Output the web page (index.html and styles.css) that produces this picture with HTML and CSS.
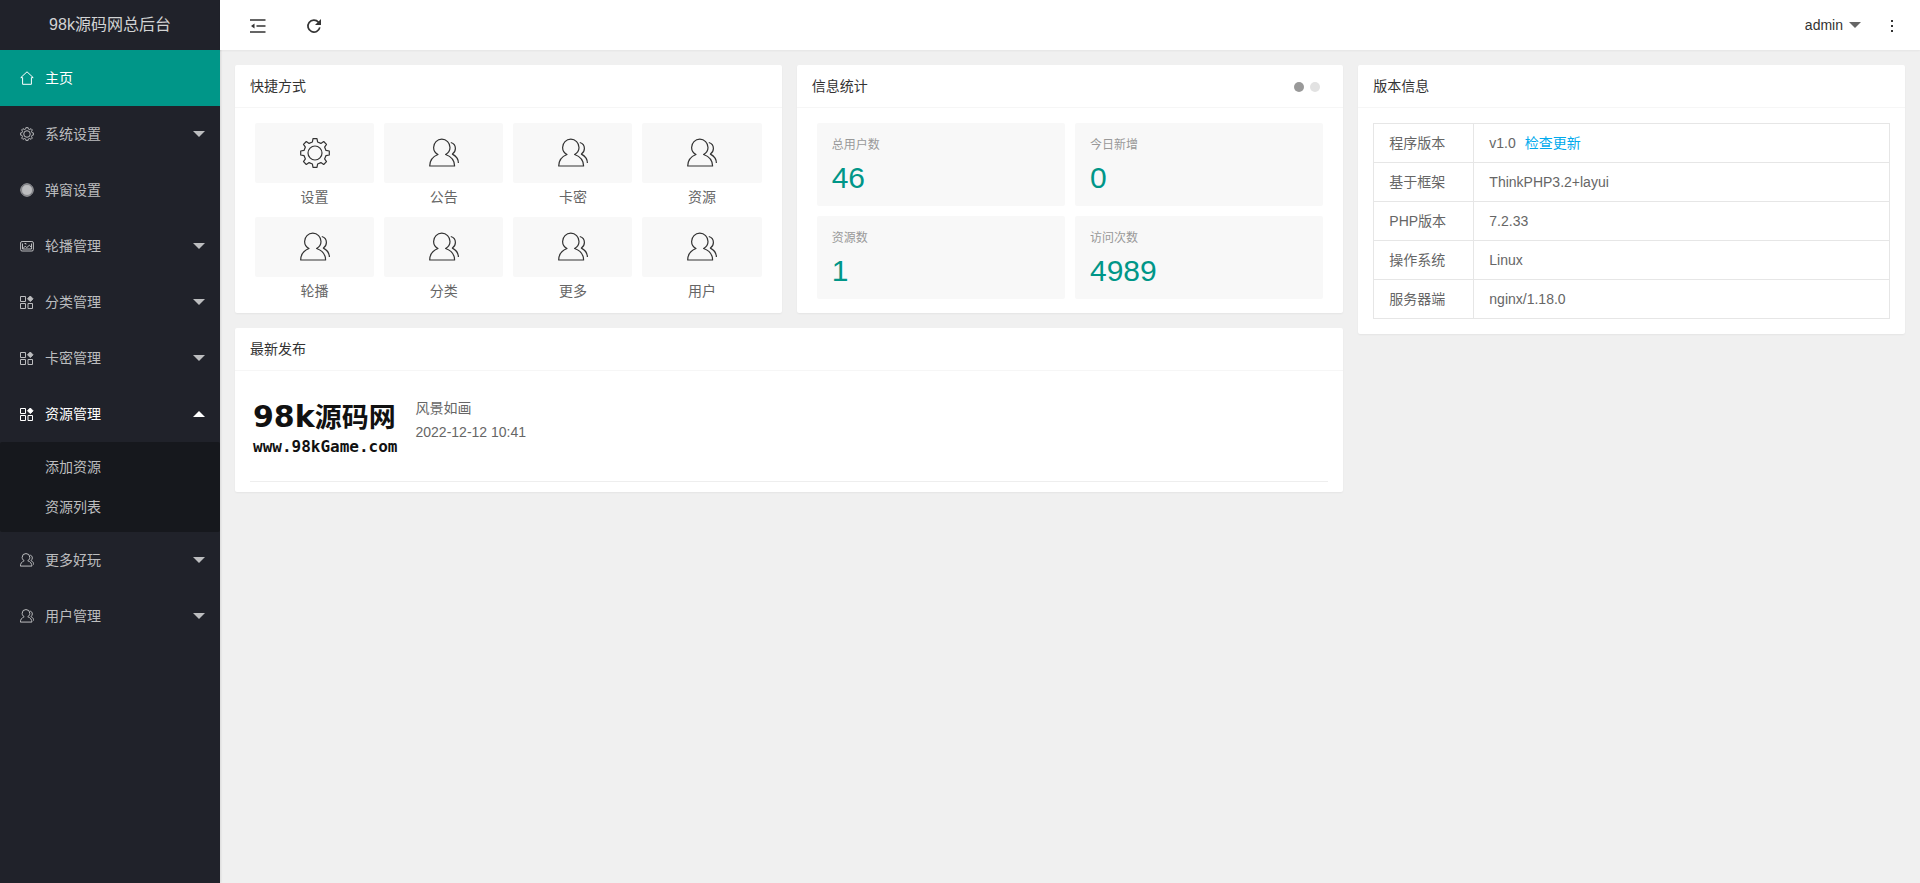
FILE: index.html
```html
<!DOCTYPE html>
<html lang="zh-CN">
<head>
<meta charset="utf-8">
<meta name="viewport" content="width=device-width, initial-scale=1">
<title>98k源码网总后台</title>
<link rel="stylesheet" href="styles.css">
</head>
<body>
<svg class="sprite" aria-hidden="true">
  <symbol id="i-home" viewBox="0 0 14 14"><path d="M7 .8L.8 6.6H2.6V13.3H11.4V6.6H13.2Z"/></symbol>
  <symbol id="i-gear" viewBox="-15 -15 30 30"><path d="M-2-14.3H2L2.6-11L5.9-9.6L8.7-11.5L11.5-8.7L9.6-5.9L11-2.6L14.3-2V2L11 2.6L9.6 5.9L11.5 8.7L8.7 11.5L5.9 9.6L2.6 11L2 14.3H-2L-2.6 11L-5.9 9.6L-8.7 11.5L-11.5 8.7L-9.6 5.9L-11 2.6L-14.3 2V-2L-11-2.6L-9.6-5.9L-11.5-8.7L-8.7-11.5L-5.9-9.6L-2.6-11Z"/><circle r="7"/></symbol>
  <symbol id="i-dot" viewBox="0 0 14 14"><circle cx="7" cy="7" r="6.2"/><circle cx="7" cy="7" r="5" fill="currentColor"/></symbol>
  <symbol id="i-pic" viewBox="0 0 14 14"><rect x=".6" y="2.500" width="12.800" height="9.500" rx="1.500"/><path d="M2.500 10L5.200 7.200L6.800 8.600L9.400 6.200L11.500 8.500V10ZM2.500 10V4.500M11.500 8.500V4.500M4.500 4.500H6V5.500"/></symbol>
  <symbol id="i-app" viewBox="0 0 14 14"><path d="M.5 1.500H5.500V6.500H.5ZM.5 8.500H5.500V13.500H.5ZM8 8.500H12.500V13.500H8Z"/><path fill="currentColor" d="M10.300 1L13 3.800L10.300 6.600L7.500 3.800Z"/></symbol>
  <symbol id="i-user" viewBox="0 0 30 30"><path d="M9 16.500C6 14.800 4.600 12.200 4.600 9.400a8.200 8.200 0 0 1 16.400 0c0 2.800-1.500 5.400-4.400 7.100 5.500 2 9 6.500 9 11.500H.7c0-5 3.300-9.500 8.300-11.500z"/><path d="M21.800 4.500c2.800.8 4.600 3 4.600 6 0 2.400-1 4.200-3 5.600 3.800 2 6 5 6 9"/></symbol>
</svg>

<div class="app">
  <aside class="side">
    <div class="brand">98k源码网总后台</div>
    <nav>
      <ul class="menu">
        <li><a class="item active" href="#"><svg class="ico"><use href="#i-home"/></svg>主页</a></li>
        <li><a class="item" href="#"><svg class="ico"><use href="#i-gear"/></svg>系统设置<span class="caret"></span></a></li>
        <li><a class="item" href="#"><svg class="ico"><use href="#i-dot"/></svg>弹窗设置</a></li>
        <li><a class="item" href="#"><svg class="ico"><use href="#i-pic"/></svg>轮播管理<span class="caret"></span></a></li>
        <li><a class="item" href="#"><svg class="ico"><use href="#i-app"/></svg>分类管理<span class="caret"></span></a></li>
        <li><a class="item" href="#"><svg class="ico"><use href="#i-app"/></svg>卡密管理<span class="caret"></span></a></li>
        <li>
          <a class="item open" href="#"><svg class="ico"><use href="#i-app"/></svg>资源管理<span class="caret up"></span></a>
          <ul class="submenu">
            <li><a href="#">添加资源</a></li>
            <li><a href="#">资源列表</a></li>
          </ul>
        </li>
        <li><a class="item" href="#"><svg class="ico"><use href="#i-user"/></svg>更多好玩<span class="caret"></span></a></li>
        <li><a class="item" href="#"><svg class="ico"><use href="#i-user"/></svg>用户管理<span class="caret"></span></a></li>
      </ul>
    </nav>
  </aside>

  <div class="page">
    <header class="topbar">
      <button class="tool" type="button" aria-label="侧边伸缩">
        <svg width="16" height="16" viewBox="0 0 16 16"><path d="M0 2H15.500M6.500 8H15.500M0 14H15.500" fill="none" stroke="currentColor" stroke-width="1.600"/><path d="M1 8L4.500 5.600V10.400Z" fill="currentColor"/></svg>
      </button>
      <button class="tool" type="button" aria-label="刷新">
        <svg width="16" height="16" viewBox="0 0 16 16"><path d="M12.500 4.200A6 6 0 1 0 13.800 9.300" fill="none" stroke="currentColor" stroke-width="1.700"/><path d="M15 1V7H9Z" fill="currentColor"/></svg>
      </button>
      <button class="account" type="button">admin<span class="caret"></span></button>
      <button class="more" type="button" aria-label="更多">
        <svg width="4" height="14" viewBox="0 0 4 14" fill="currentColor"><path d="M1 1H3V3H1ZM1 6H3V8H1ZM1 11H3V13H1Z"/></svg>
      </button>
    </header>

    <main class="board">
      <section class="card">
        <h2 class="card-head">快捷方式</h2>
        <ul class="shortcuts">
          <li><a href="#"><span class="tile"><svg><use href="#i-gear"/></svg></span>设置</a></li>
          <li><a href="#"><span class="tile"><svg><use href="#i-user"/></svg></span>公告</a></li>
          <li><a href="#"><span class="tile"><svg><use href="#i-user"/></svg></span>卡密</a></li>
          <li><a href="#"><span class="tile"><svg><use href="#i-user"/></svg></span>资源</a></li>
          <li><a href="#"><span class="tile"><svg><use href="#i-user"/></svg></span>轮播</a></li>
          <li><a href="#"><span class="tile"><svg><use href="#i-user"/></svg></span>分类</a></li>
          <li><a href="#"><span class="tile"><svg><use href="#i-user"/></svg></span>更多</a></li>
          <li><a href="#"><span class="tile"><svg><use href="#i-user"/></svg></span>用户</a></li>
        </ul>
      </section>

      <section class="card">
        <h2 class="card-head">信息统计
          <span class="pager"><button class="on" type="button" aria-label="第1页"></button><button type="button" aria-label="第2页"></button></span>
        </h2>
        <div class="stats">
          <a class="stat" href="#"><span class="stat-name">总用户数</span><span class="stat-num">46</span></a>
          <a class="stat" href="#"><span class="stat-name">今日新增</span><span class="stat-num">0</span></a>
          <a class="stat" href="#"><span class="stat-name">资源数</span><span class="stat-num">1</span></a>
          <a class="stat" href="#"><span class="stat-name">访问次数</span><span class="stat-num">4989</span></a>
        </div>
      </section>

      <section class="card version">
        <h2 class="card-head">版本信息</h2>
        <div class="card-body">
          <table class="info">
            <tbody>
              <tr><th scope="row">程序版本</th><td>v1.0 <a href="#">检查更新</a></td></tr>
              <tr><th scope="row">基于框架</th><td>ThinkPHP3.2+layui</td></tr>
              <tr><th scope="row">PHP版本</th><td>7.2.33</td></tr>
              <tr><th scope="row">操作系统</th><td>Linux</td></tr>
              <tr><th scope="row">服务器端</th><td>nginx/1.18.0</td></tr>
            </tbody>
          </table>
        </div>
      </section>

      <section class="card news">
        <h2 class="card-head">最新发布</h2>
        <div class="news-body">
          <article class="post">
            <div class="thumb">
              <div class="thumb-name">98k<span class="thumb-cn">源码网</span></div>
              <div class="thumb-url">www.98kGame.com</div>
            </div>
            <div class="post-text">
              <p>风景如画</p>
              <p>2022-12-12 10:41</p>
            </div>
          </article>
        </div>
      </section>
    </main>
  </div>
</div>
</body>
</html>
```

FILE: styles.css
```css
* {
  box-sizing: border-box;
}

body {
  margin: 0;
  background: #f0f0f0;
  color: #666;
  font: 14px/24px "Liberation Sans", "Noto Sans CJK SC", sans-serif;
}

h2, p, ul {
  margin: 0;
  padding: 0;
}

ul {
  list-style: none;
}

a {
  color: inherit;
  text-decoration: none;
}

button {
  margin: 0;
  padding: 0;
  border: 0;
  background: none;
  color: #333;
  font: inherit;
  cursor: pointer;
}

svg {
  display: block;
}

.sprite {
  display: none;
}

symbol path,
symbol circle,
symbol rect {
  stroke: currentColor;
  stroke-linejoin: round;
  vector-effect: non-scaling-stroke;
}

.ico,
.tile svg {
  fill: none;
}

.app {
  display: flex;
  min-height: 100vh;
}

/* Sidebar */

.side {
  flex: 0 0 220px;
  background: #20222a;
  color: #bcbdbf;
  box-shadow: 1px 0 2px rgba(0, 0, 0, 0.1);
}

.brand {
  height: 50px;
  line-height: 50px;
  font-size: 16px;
  text-align: center;
  color: #d2d3d4;
  box-shadow: 0 1px 2px rgba(0, 0, 0, 0.15);
}

.item {
  display: flex;
  align-items: center;
  gap: 11px;
  height: 56px;
  padding: 0 15px 0 20px;
}

.item.active {
  background: #009688;
  color: #fff;
}

.item.open {
  color: #fff;
}

.ico {
  width: 14px;
  height: 14px;
}

.caret {
  border: 6px solid transparent;
  border-top-color: currentColor;
  border-bottom-width: 0;
}

.caret.up {
  border-width: 0 6px 6px;
  border-bottom-color: currentColor;
}

.item .caret {
  margin-left: auto;
}

.submenu {
  padding: 5px 0;
  border-radius: 2px;
  background: #16181d;
}

.submenu a {
  display: block;
  padding-left: 45px;
  line-height: 40px;
}

/* Top bar */

.page {
  flex: 1;
  min-width: 0;
}

.topbar {
  display: flex;
  align-items: center;
  height: 50px;
  padding: 0 26px 0 15px;
  background: #fff;
  box-shadow: 0 1px 2px rgba(0, 0, 0, 0.05);
}

.tool {
  display: flex;
  align-items: center;
  justify-content: center;
  width: 46px;
  height: 50px;
  padding-top: 2px;
}

.tool + .tool {
  margin-left: 10px;
}

.account {
  display: flex;
  align-items: center;
  gap: 6px;
  margin-left: auto;
}

.account .caret {
  color: #666;
}

.more {
  margin-left: 29px;
  padding-top: 2px;
}

/* Cards */

.board {
  display: grid;
  grid-template-columns: repeat(3, minmax(0, 1fr));
  gap: 15px;
  align-items: start;
  padding: 15px;
}

.card {
  border-radius: 2px;
  background: #fff;
  box-shadow: 0 1px 2px rgba(0, 0, 0, 0.05);
}

.card-head {
  display: flex;
  align-items: center;
  justify-content: space-between;
  padding: 0 15px;
  border-bottom: 1px solid #f6f6f6;
  color: #333;
  font-size: 14px;
  font-weight: 400;
  line-height: 42px;
}

.card-body {
  padding: 15px;
}

.version {
  grid-column: 3;
  grid-row: 1 / span 2;
}

.news {
  grid-column: 1 / span 2;
}

.shortcuts {
  display: grid;
  grid-template-columns: repeat(4, 1fr);
  gap: 8px 10px;
  padding: 15px 20px 10px;
  text-align: center;
}

.shortcuts a {
  display: block;
}

.tile {
  display: flex;
  align-items: center;
  justify-content: center;
  height: 60px;
  margin-bottom: 2px;
  border-radius: 2px;
  background: #f8f8f8;
  color: #333;
}

.tile svg {
  width: 30px;
  height: 30px;
  stroke-width: 1.2;
}

.pager {
  display: flex;
  gap: 6px;
  padding: 2px 8px 0 0;
}

.pager button {
  width: 10px;
  height: 10px;
  border-radius: 50%;
  background: #e2e2e2;
}

.pager .on {
  background: #999;
}

.stats {
  display: grid;
  grid-template-columns: 1fr 1fr;
  gap: 10px;
  padding: 15px 20px 14px;
}

.stat {
  display: flex;
  flex-direction: column;
  padding: 10px 15px 8px;
  border-radius: 2px;
  background: #f8f8f8;
}

.stat-name {
  color: #999;
  font-size: 12px;
}

.stat-num {
  color: #009688;
  font-size: 30px;
  line-height: 41px;
}

.info {
  width: 100%;
  border-collapse: collapse;
  line-height: 20px;
}

.info th,
.info td {
  padding: 9px 15px;
  border: 1px solid #e6e6e6;
  font-weight: 400;
  text-align: left;
}

.info th {
  width: 100px;
}

.info a {
  margin-left: 5px;
  color: #01aaed;
}

.news-body {
  padding: 0 15px 10px;
}

.post {
  display: flex;
  gap: 15px;
  padding: 25px 0 24px;
  border-bottom: 1px solid #eee;
}

.thumb {
  flex: 0 0 150px;
  padding: 0 3px;
  color: #111;
  font-weight: 700;
  white-space: nowrap;
}

.thumb-name {
  font-family: "DejaVu Sans", sans-serif;
  font-size: 30px;
  line-height: 40px;
}

.thumb-cn {
  font-family: "Noto Sans CJK SC", sans-serif;
  font-size: 27px;
}

.thumb-url {
  font-family: "DejaVu Sans Mono", monospace;
  font-size: 16px;
  line-height: 20px;
}
```
